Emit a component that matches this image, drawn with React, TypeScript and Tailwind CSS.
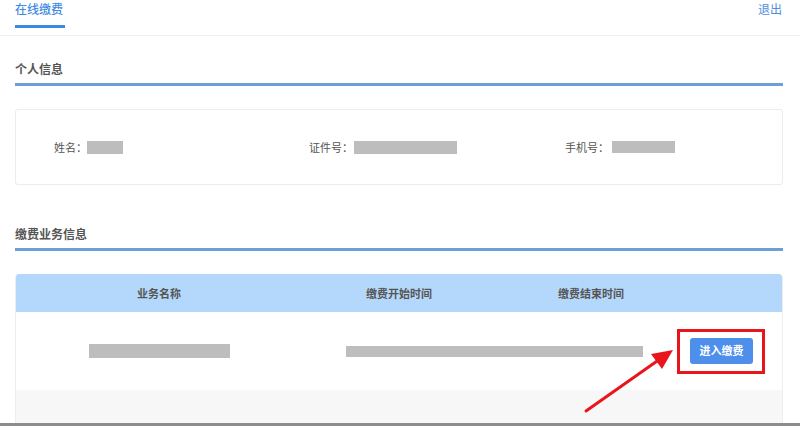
import React from "react";

const font = { fontFamily: '"Noto Sans CJK SC", "Noto Sans", sans-serif' };

function Bar({ w, h = 13 }: { w: number; h?: number }) {
  return <div className="shrink-0 bg-[#bdbdbd]" style={{ width: w, height: h }} />;
}

export default function App() {
  return (
    <div
      className="relative w-[800px] h-[426px] overflow-hidden bg-white text-[#555]"
      style={font}
    >
      {/* top bar */}
      <div className="flex h-[36px] justify-between border-b border-[#f0f0f0] pl-[15px] pr-[18px]">
        <div className="flex flex-col">
          <span className="pt-[1px] text-[12px] leading-[16px] font-medium text-[#3f8be3]">
            在线缴费
          </span>
          <div className="mt-[8px] h-[3px] w-[50px] bg-[#3b8ae0]" />
        </div>
        <span className="pt-[1px] text-[12px] leading-[16px] text-[#4f8fdc]">退出</span>
      </div>

      <div className="ml-[15px] w-[768px]">
        {/* 个人信息 */}
        <div className="mt-[25px] text-[12px] leading-[16px] font-bold text-[#555]">个人信息</div>
        <div className="mt-[6px] h-[3px] w-[768px] bg-[#6a9fd8]" />

        <div className="mt-[23px] flex h-[76px] w-[768px] items-center rounded-[3px] border border-[#ececec] pl-[38px]">
          <div className="flex w-[255px] shrink-0 items-center text-[11px]">
            <span>姓名：</span>
            <Bar w={36} />
          </div>
          <div className="flex w-[256px] shrink-0 items-center text-[11px]">
            <span>证件号：</span>
            <div className="ml-[1px]">
              <Bar w={103} />
            </div>
          </div>
          <div className="flex w-[200px] shrink-0 items-center text-[11px]">
            <span>手机号：</span>
            <div className="ml-[3px]">
              <Bar w={63} h={12} />
            </div>
          </div>
        </div>

        {/* 缴费业务信息 */}
        <div className="mt-[41px] text-[12px] leading-[16px] font-bold text-[#555]">缴费业务信息</div>
        <div className="mt-[6px] h-[3px] w-[768px] bg-[#6a9fd8]" />

        {/* table */}
        <div className="mt-[23px] w-[768px] overflow-hidden rounded-t-[4px] border-x border-[#eeeeee]">
          <div className="flex h-[38px] items-center bg-[#b4d8fc] text-[11px] font-bold text-[#555]">
            <div className="w-[286px] shrink-0 text-center">业务名称</div>
            <div className="w-[194px] shrink-0 text-center">缴费开始时间</div>
            <div className="w-[190px] shrink-0 text-center">缴费结束时间</div>
          </div>
          <div className="flex h-[78px] items-center bg-white">
            <div className="flex w-[286px] shrink-0 justify-center">
              <Bar w={141} h={14} />
            </div>
            <div className="ml-[44px]">
              <Bar w={297} h={11} />
            </div>
            <div className="ml-[34px] shrink-0 border-[3px] border-[#e8161c] pb-[7px] pl-[10px] pr-[9px] pt-[6px]">
              <button className="flex h-[26px] w-[63px] items-center justify-center rounded-[3px] bg-[#4f8fec] text-[11px] font-bold text-white">
                进入缴费
              </button>
            </div>
          </div>
          <div className="h-[33px] bg-[#f7f7f7]" />
        </div>
      </div>
      <div className="h-[3px] bg-[#8c8c8c]" />

      {/* annotation arrow */}
      <svg
        className="absolute left-0 top-0"
        width="800"
        height="426"
        viewBox="0 0 800 426"
      >
        <line x1="586" y1="411" x2="660" y2="359" stroke="#e8161c" strokeWidth="3" strokeLinecap="round" />
        <polygon points="673,350 651,354 662,369" fill="#e8161c" />
      </svg>
    </div>
  );
}
